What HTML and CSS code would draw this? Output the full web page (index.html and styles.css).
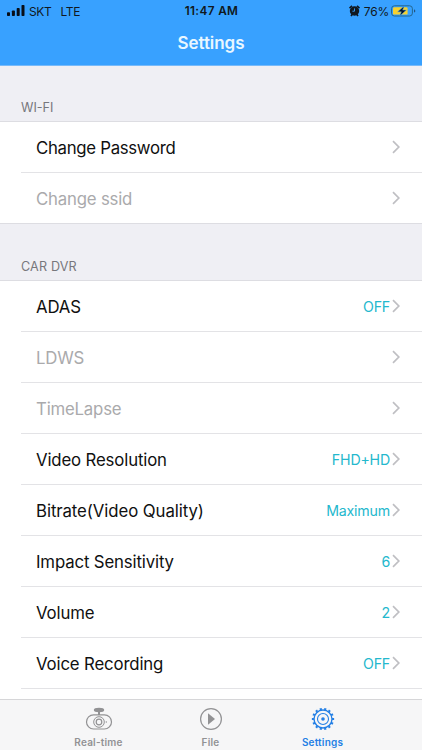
FILE: index.html
```html
<!DOCTYPE html>
<html lang="en">
<head>
<meta charset="utf-8">
<title>Settings</title>
<link rel="stylesheet" href="styles.css">
</head>
<body>
<svg width="0" height="0" class="defs"><symbol id="chevron" viewBox="0 0 8 14"><path d="M1 1.2 6.8 7 1 12.8" fill="none" stroke="currentColor" stroke-width="1.7"/></symbol></svg>
<div class="screen">
  <header class="top">
    <div class="status">
      <div class="carrier">
        <svg width="18" height="12" viewBox="0 0 18 12"><rect x="0" y="7.3" width="3" height="3.7" rx=".8"/><rect x="4.9" y="5.4" width="3" height="5.6" rx=".8"/><rect x="9.7" y="3" width="3" height="8" rx=".8"/><rect x="14.5" y="0" width="3" height="11" rx=".8"/></svg>
        <span class="network">SKT</span><span>LTE</span>
      </div>
      <div class="time">11:47 AM</div>
      <div class="power">
        <svg width="11" height="12" viewBox="0 0 11 12"><path d="M.5 3.1 3 .8M8 .8l2.5 2.3M2 11l1.4-1.8M9 11 7.6 9.2" stroke="#101820" stroke-width="1.6"/><circle cx="5.5" cy="6" r="4.7" fill="#101820"/><path d="M5.5 3.4v2.8H3.4" fill="none" stroke="#38a1ff" stroke-width=".9"/></svg>
        <span>76%</span>
        <svg width="25" height="12" viewBox="0 0 25 12"><rect x=".6" y=".8" width="20.8" height="10.2" rx="2.8" fill="none" stroke="#23668f" stroke-width="1"/><rect x="2" y="2.2" width="14.6" height="7.4" rx="1.2" fill="#f8d12d"/><path d="M23 4.2c1.8.6 1.8 2.8 0 3.4z" fill="#23557f"/><path d="M13.2 1 6.7 6.8h3.6L8.8 11l6.5-5.9h-3.6z" fill="#081426" stroke="#38a1ff" stroke-width=".5"/></svg>
      </div>
    </div>
    <h1>Settings</h1>
  </header>
  <main>
    <h2 class="first">WI-FI</h2>
    <ul>
      <li><div class="row"><span class="label password">Change Password</span><svg class="chevron"><use href="#chevron"/></svg></div></li>
      <li><div class="row disabled"><span class="label">Change ssid</span><svg class="chevron"><use href="#chevron"/></svg></div></li>
    </ul>
    <h2>CAR DVR</h2>
    <ul>
      <li><div class="row"><span class="label">ADAS</span><span class="value">OFF</span><svg class="chevron"><use href="#chevron"/></svg></div></li>
      <li><div class="row disabled"><span class="label">LDWS</span><svg class="chevron"><use href="#chevron"/></svg></div></li>
      <li><div class="row disabled"><span class="label">TimeLapse</span><svg class="chevron"><use href="#chevron"/></svg></div></li>
      <li><div class="row"><span class="label">Video Resolution</span><span class="value">FHD+HD</span><svg class="chevron"><use href="#chevron"/></svg></div></li>
      <li><div class="row"><span class="label bitrate">Bitrate(Video Quality)</span><span class="value">Maximum</span><svg class="chevron"><use href="#chevron"/></svg></div></li>
      <li><div class="row"><span class="label">Impact Sensitivity</span><span class="value">6</span><svg class="chevron"><use href="#chevron"/></svg></div></li>
      <li><div class="row"><span class="label">Volume</span><span class="value">2</span><svg class="chevron"><use href="#chevron"/></svg></div></li>
      <li><div class="row"><span class="label">Voice Recording</span><span class="value">OFF</span><svg class="chevron"><use href="#chevron"/></svg></div></li>
      <li class="partial"></li>
    </ul>
  </main>
  <nav>
    <div class="tab">
      <svg width="28" height="24" viewBox="0 0 28 24" fill="none" stroke="currentColor"><ellipse cx="14" cy="3" rx="5.2" ry="2.2" fill="currentColor" stroke="none"/><path d="M14 4v4" stroke-width="2"/><rect x="1.5" y="7.8" width="25" height="14.2" rx="7.1" stroke-width="1.2"/><circle cx="14" cy="15" r="5.3"/><circle cx="14" cy="15" r="2.8" stroke-width="1.2"/><circle cx="21.3" cy="15" r=".7" fill="currentColor" stroke="none"/></svg>
      <span>Real-time</span>
    </div>
    <div class="tab">
      <svg width="24" height="24" viewBox="0 0 24 24"><circle cx="12" cy="12" r="10.4" fill="none" stroke="currentColor" stroke-width="1.2"/><path d="M9 6.3v11.4l7-5.7z" fill="currentColor"/></svg>
      <span>File</span>
    </div>
    <div class="tab active">
      <svg width="24" height="24" viewBox="0 0 24 24" fill="none" stroke="currentColor"><circle cx="12" cy="12" r="9" stroke-width="1.4"/><circle cx="12" cy="12" r="10.1" stroke-width="2.1" pathLength="140" stroke-dasharray="4.6 5.4" stroke-dashoffset="2.3"/><circle cx="12" cy="12" r="5.5" stroke-width="1.1"/><circle cx="12" cy="12" r="1.8" fill="currentColor" stroke="none"/></svg>
      <span>Settings</span>
    </div>
  </nav>
</div>
</body>
</html>
```
FILE: styles.css
```css
* { box-sizing: border-box; }
body { margin: 0; font-family: Inter, "Liberation Sans", sans-serif; }
.defs { position: absolute; }
.screen { width: 422px; height: 750px; display: flex; flex-direction: column; overflow: hidden; background: #efeff4; }
.top { height: 66px; flex: none; background: #38a1ff; border-bottom: 1px solid #77bafa; }
.status { height: 22px; display: grid; grid-template-columns: 1fr auto 1fr; align-items: center; padding: 0 6px 0 7px; font-size: 12px; color: #101820; }
.status svg { display: block; }
.carrier, .power { display: flex; align-items: center; }
.carrier { gap: 4px; letter-spacing: -.35px; }
.carrier svg { fill: #080e18; }
.network { margin-right: 5px; }
.time { font-size: 11.8px; font-weight: 600; letter-spacing: .35px; }
.power { justify-content: flex-end; gap: 4px; letter-spacing: -.2px; }
.power span { margin-right: -2px; }
h1 { margin: 0; height: 43px; line-height: 43px; text-align: center; font-size: 17px; font-weight: 600; letter-spacing: -.05px; color: #e9f7ff; }
main { flex: 1; min-height: 0; overflow: hidden; }
h2 { margin: 0; height: 56.6px; padding: 35px 0 0 21px; font-size: 12.6px; line-height: 15px; font-weight: 400; letter-spacing: .15px; color: #77777c; }
h2.first { height: 55px; padding-top: 34px; letter-spacing: 0; }
ul { margin: 0; padding: 0 0 0 21px; list-style: none; background: #fff; border-top: 1px solid #dddde2; border-bottom: 1px solid #dddde2; }
.row { height: 50.9px; display: flex; align-items: center; padding: 0 22px 0 15px; border-bottom: 1px solid #e3e3e6; }
li:last-child .row { height: 49.9px; border-bottom: 0; }
.label { flex: 1; padding-top: 2px; font-size: 16.8px; letter-spacing: -.15px; color: #101010; white-space: nowrap; }
.password { letter-spacing: -.3px; }
.bitrate { letter-spacing: -.08px; }
.disabled .label { color: #aaaaac; letter-spacing: -.2px; }
.value { margin-right: 2px; padding-top: 1px; font-size: 14.2px; letter-spacing: -.2px; color: #24b8cd; }
.chevron { width: 8px; height: 14px; color: #bfbfc3; }
.partial { height: 50px; }
nav { height: 51px; flex: none; display: grid; grid-template-columns: repeat(3, 112px); justify-content: center; padding: 7px 1px 0 0; background: #f6f6f7; border-top: 1px solid #d6d6d8; }
.tab { display: flex; flex-direction: column; align-items: center; color: #929294; font-size: 10px; line-height: 12px; font-weight: 600; letter-spacing: .2px; }
.tab span { margin-top: 5px; }
.active { color: #237fe5; }
```
